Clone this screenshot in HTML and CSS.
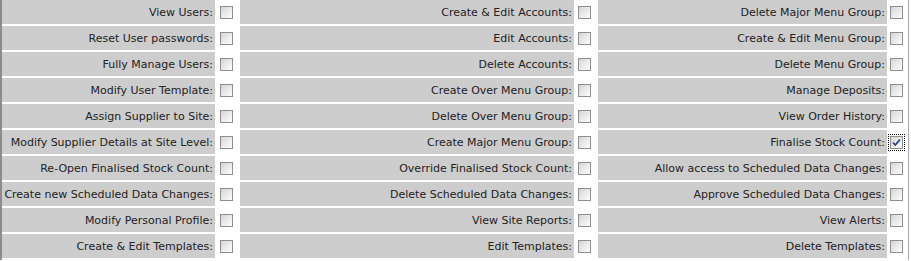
FILE: index.html
```html
<!DOCTYPE html>
<html lang="en">
<head>
    <meta charset="UTF-8">
    <title>User Permissions</title>
    <link rel="stylesheet" href="styles.css">
</head>
<body>
    <table class="perms">
        <colgroup>
            <col class="c-label1"><col class="c-box1">
            <col class="c-label2"><col class="c-box2">
            <col class="c-label3"><col class="c-box3">
        </colgroup>
        <tr>
            <td class="label">View Users:</td><td class="box"><span class="cb"></span></td>
            <td class="label">Create &amp; Edit Accounts:</td><td class="box"><span class="cb"></span></td>
            <td class="label">Delete Major Menu Group:</td><td class="box"><span class="cb"></span></td>
        </tr>
        <tr>
            <td class="label">Reset User passwords:</td><td class="box"><span class="cb"></span></td>
            <td class="label">Edit Accounts:</td><td class="box"><span class="cb"></span></td>
            <td class="label">Create &amp; Edit Menu Group:</td><td class="box"><span class="cb"></span></td>
        </tr>
        <tr>
            <td class="label">Fully Manage Users:</td><td class="box"><span class="cb"></span></td>
            <td class="label">Delete Accounts:</td><td class="box"><span class="cb"></span></td>
            <td class="label">Delete Menu Group:</td><td class="box"><span class="cb"></span></td>
        </tr>
        <tr>
            <td class="label">Modify User Template:</td><td class="box"><span class="cb"></span></td>
            <td class="label">Create Over Menu Group:</td><td class="box"><span class="cb"></span></td>
            <td class="label">Manage Deposits:</td><td class="box"><span class="cb"></span></td>
        </tr>
        <tr>
            <td class="label">Assign Supplier to Site:</td><td class="box"><span class="cb"></span></td>
            <td class="label">Delete Over Menu Group:</td><td class="box"><span class="cb"></span></td>
            <td class="label">View Order History:</td><td class="box"><span class="cb"></span></td>
        </tr>
        <tr>
            <td class="label">Modify Supplier Details at Site Level:</td><td class="box"><span class="cb"></span></td>
            <td class="label">Create Major Menu Group:</td><td class="box"><span class="cb"></span></td>
            <td class="label">Finalise Stock Count:</td>
            <td class="box"><span class="cb checked"><svg width="11" height="11" viewBox="0 0 11 11"><path d="M2 5.5 L4.3 8 L9 2.5" fill="none" stroke="#2b3f91" stroke-width="1.8"/></svg></span></td>
        </tr>
        <tr>
            <td class="label">Re-Open Finalised Stock Count:</td><td class="box"><span class="cb"></span></td>
            <td class="label">Override Finalised Stock Count:</td><td class="box"><span class="cb"></span></td>
            <td class="label">Allow access to Scheduled Data Changes:</td><td class="box"><span class="cb"></span></td>
        </tr>
        <tr>
            <td class="label">Create new Scheduled Data Changes:</td><td class="box"><span class="cb"></span></td>
            <td class="label">Delete Scheduled Data Changes:</td><td class="box"><span class="cb"></span></td>
            <td class="label">Approve Scheduled Data Changes:</td><td class="box"><span class="cb"></span></td>
        </tr>
        <tr>
            <td class="label">Modify Personal Profile:</td><td class="box"><span class="cb"></span></td>
            <td class="label">View Site Reports:</td><td class="box"><span class="cb"></span></td>
            <td class="label">View Alerts:</td><td class="box"><span class="cb"></span></td>
        </tr>
        <tr>
            <td class="label">Create &amp; Edit Templates:</td><td class="box"><span class="cb"></span></td>
            <td class="label">Edit Templates:</td><td class="box"><span class="cb"></span></td>
            <td class="label">Delete Templates:</td><td class="box"><span class="cb"></span></td>
        </tr>
    </table>
</body>
</html>
```

FILE: styles.css
```css
html,body{ margin:0; padding:0; background:#fff; }
body{ font-family:"DejaVu Sans", Verdana, sans-serif; font-size:11px; color:#222; }

.perms{
    table-layout:fixed;
    border-collapse:separate;
    border-spacing:0;
    width:907px;
    border-left:2px solid #8c8c8c;
    border-right:1px solid #a8a8a8;
}
.c-label1{ width:213px; }
.c-box1{ width:25px; }
.c-label2{ width:334px; }
.c-box2{ width:24px; }
.c-label3{ width:289px; }
.c-box3{ width:21px; }

.perms td{
    height:24px;
    padding:0;
    border-bottom:2px solid #fff;
    vertical-align:middle;
    white-space:nowrap;
}
.perms td.label{
    background:#cdcdcd;
    text-align:right;
    padding-right:2px;
}
.perms td.box{
    background:#fff;
    line-height:0;
}
.perms td.box:nth-child(2){ padding-left:5px; }
.perms td.box:nth-child(4){ padding-left:4px; }
.perms td.box:nth-child(6){ padding-left:3px; }

.cb{
    display:inline-block;
    width:11px;
    height:11px;
    border:1px solid #8f8f8f;
    background:linear-gradient(135deg, #d4d4d4 0%, #ececec 55%, #fdfdfd 100%);
}
.cb svg{ display:block; }
.cb.checked{
    outline:1px dotted #000;
    outline-offset:1px;
}
```
